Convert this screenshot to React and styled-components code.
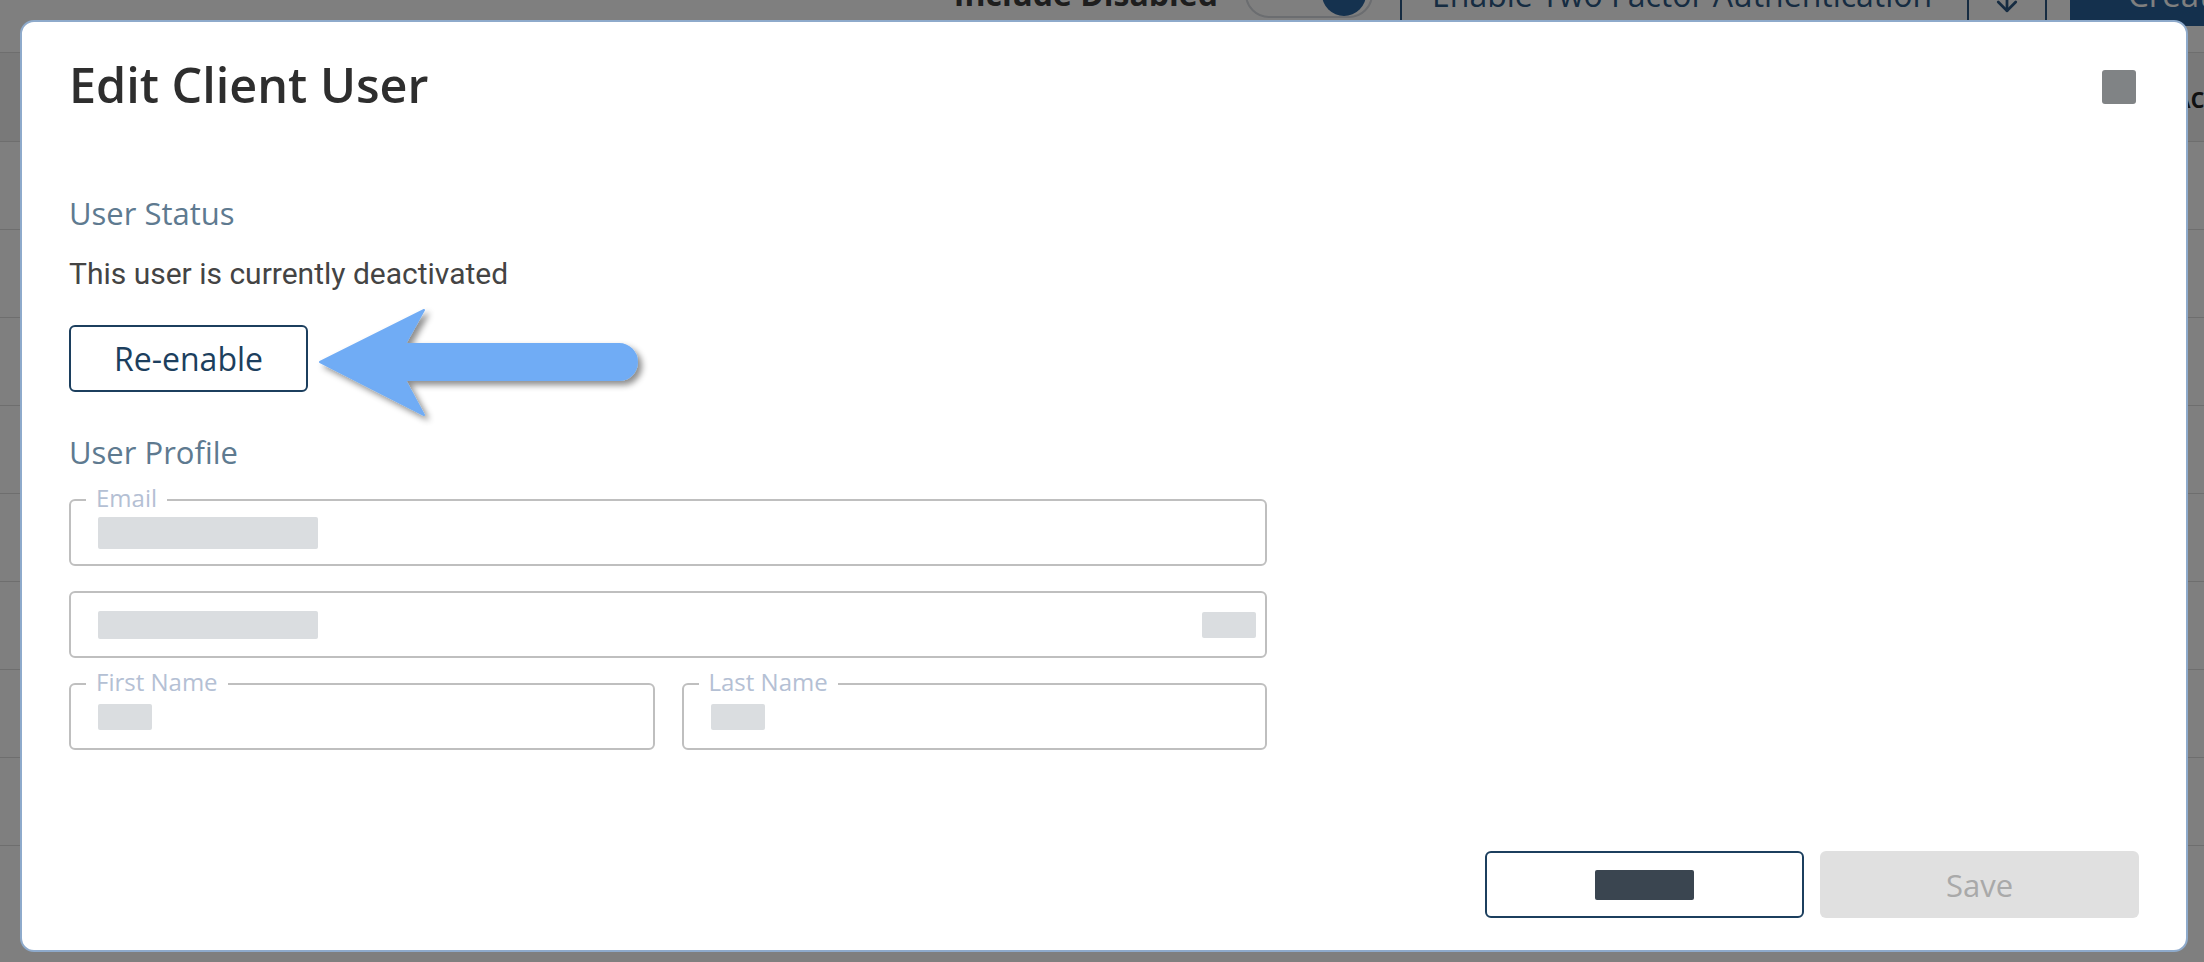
import React from 'react'
import styled, { createGlobalStyle } from 'styled-components'
import { ArrowDown } from 'lucide-react'

const GlobalStyle = createGlobalStyle`
  html, body {
    margin: 0;
    padding: 0;
    overflow: hidden;
    background: #fff;
  }
  * {
    box-sizing: border-box;
  }
`

function App() {
  const rows = [0, 1, 2, 3, 4, 5, 6, 7, 8]

  return (
    <>
      <GlobalStyle />
      <Page>
        <Toolbar>
          <ToggleLabel>Include Disabled</ToggleLabel>
          <Track>
            <Knob />
          </Track>
          <ButtonGroup>
            <OutlineAction>Enable Two Factor Authentication</OutlineAction>
            <IconAction>
              <ArrowDown size={30} strokeWidth={2.2} />
            </IconAction>
          </ButtonGroup>
          <CreateAction>Create</CreateAction>
        </Toolbar>
        <TableHead>
          <HeadCell>Account</HeadCell>
        </TableHead>
        {rows.map((r) => (
          <TableRow key={r} />
        ))}
      </Page>

      <Backdrop>
        <Modal>
          <Header>
            <Title>Edit Client User</Title>
            <CloseBox />
          </Header>

          <SectionTitle $gap={89}>User Status</SectionTitle>
          <StatusText>This user is currently deactivated</StatusText>
          <ActionRow>
            <ReenableButton>Re-enable</ReenableButton>
            <Arrow />
          </ActionRow>

          <SectionTitle $gap={45}>User Profile</SectionTitle>
          <Form>
            <Field>
              <FieldLabel>Email</FieldLabel>
              <Redacted $w={220} $h={32} />
            </Field>
            <Field>
              <Redacted $w={220} $h={28} />
              <Redacted $w={54} $h={26} />
            </Field>
            <NameRow>
              <Field>
                <FieldLabel>First Name</FieldLabel>
                <Redacted $w={54} $h={26} />
              </Field>
              <Field>
                <FieldLabel>Last Name</FieldLabel>
                <Redacted $w={54} $h={26} />
              </Field>
            </NameRow>
          </Form>

          <Footer>
            <CancelButton>
              <Redacted $w={99} $h={30} $dark />
            </CancelButton>
            <SaveButton disabled>Save</SaveButton>
          </Footer>
        </Modal>
      </Backdrop>
    </>
  )
}

function Arrow() {
  return (
    <ArrowSvg width="340" height="125" viewBox="0 0 340 125">
      <defs>
        <filter id="arrowShadow" x="-10%" y="-20%" width="130%" height="150%">
          <feDropShadow dx="4" dy="4" stdDeviation="3" floodColor="#000" floodOpacity="0.45" />
        </filter>
      </defs>
      <path
        d="M4 66 L108 14 L89 48 L303 48 A18 18 0 0 1 303 84 L89 84 L108 119 Z"
        fill="#70acf5"
        stroke="#70acf5"
        strokeWidth="2"
        strokeLinejoin="round"
        filter="url(#arrowShadow)"
      />
    </ArrowSvg>
  )
}

export default App

/* page behind the dialog */
const Page = styled.div`
  height: 100vh;
  background: #fff;
  font-family: "Open Sans", "Liberation Sans", sans-serif;
`

const Toolbar = styled.div`
  height: 90px;
  margin-top: -38px;
  display: flex;
  justify-content: flex-end;
  align-items: flex-start;
  gap: 27px;
`

const ToggleLabel = styled.div`
  height: 64px;
  line-height: 64px;
  font-size: 32px;
  font-weight: 700;
  color: #3c3c3c;
  white-space: nowrap;
`

const Track = styled.div`
  width: 128px;
  height: 48px;
  margin-top: 8px;
  border: 2px solid #d6dae0;
  border-radius: 24px;
  display: flex;
  justify-content: flex-end;
  align-items: center;
  padding-right: 5px;
`

const Knob = styled.div`
  width: 44px;
  height: 44px;
  border-radius: 50%;
  background: #2a649e;
`

const ButtonGroup = styled.div`
  display: flex;
  margin-right: -4px;
`

const OutlineAction = styled.div`
  width: 569px;
  height: 64px;
  padding-left: 30px;
  border: 2px solid #2c5884;
  display: flex;
  align-items: center;
  font-size: 32px;
  color: #2c5884;
  white-space: nowrap;
`

const IconAction = styled.div`
  width: 80px;
  height: 64px;
  margin-left: -2px;
  padding-top: 16px;
  border: 2px solid #2c5884;
  display: flex;
  align-items: center;
  justify-content: center;
  color: #2c5884;
`

const CreateAction = styled.div`
  width: 134px;
  height: 64px;
  background: #28609a;
  color: #fff;
  font-size: 33px;
  display: flex;
  align-items: center;
  padding-left: 58px;
  overflow: hidden;
  white-space: nowrap;
`

const TableHead = styled.div`
  height: 89px;
  background: #f3f3f3;
  border-top: 1px solid #dcdcdc;
  display: grid;
  grid-template-columns: 2172px 1fr;
  align-items: center;
  overflow: hidden;
`

const HeadCell = styled.div`
  grid-column: 2;
  font-size: 28px;
  font-weight: 600;
  color: #222;
  white-space: nowrap;
`

const TableRow = styled.div`
  height: 88px;
  border-top: 1px solid #dcdcdc;
`

/* dialog */
const Backdrop = styled.div`
  position: fixed;
  inset: 0;
  background: rgba(0, 0, 0, 0.5);
  display: flex;
  padding: 20px 16px 10px 20px;
`

const Modal = styled.div`
  flex: 1;
  background: #fff;
  border: 2px solid #8eaacb;
  border-radius: 14px;
  display: flex;
  flex-direction: column;
  padding: 38px 47px 32px 47px;
  font-family: "Open Sans", "Liberation Sans", sans-serif;
`

const Header = styled.div`
  display: flex;
  justify-content: space-between;
  align-items: flex-start;
`

const Title = styled.h2`
  margin: 0;
  font-size: 48.5px;
  line-height: 49px;
  font-weight: 600;
  color: #2e2e2e;
`

const CloseBox = styled.div`
  width: 34px;
  height: 34px;
  margin-top: 10px;
  margin-right: 3px;
  border-radius: 3px;
  background: #808385;
`

const SectionTitle = styled.h3`
  margin: ${(p) => p.$gap}px 0 0;
  font-size: 31px;
  line-height: 31px;
  font-weight: 400;
  color: #5e7a90;
`

const StatusText = styled.p`
  margin: 30px 0 0;
  font-family: Roboto, "Liberation Sans", sans-serif;
  font-size: 30px;
  line-height: 30px;
  color: #444;
`

const ActionRow = styled.div`
  height: 67px;
  margin-top: 36px;
  display: flex;
  align-items: center;
`

const ReenableButton = styled.button`
  width: 239px;
  height: 67px;
  flex-shrink: 0;
  border: 2px solid #1c3f5e;
  border-radius: 6px;
  background: #fff;
  font-family: "Open Sans", "Liberation Sans", sans-serif;
  font-size: 32px;
  color: #1c3f5e;
  padding: 0;
  cursor: pointer;
`

const ArrowSvg = styled.svg`
  flex-shrink: 0;
  margin-left: 8px;
  overflow: visible;
`

const Form = styled.div`
  width: 1198px;
  margin-top: 31px;
  display: flex;
  flex-direction: column;
  gap: 25px;
`

const Field = styled.div`
  position: relative;
  height: 67px;
  border: 2px solid #bfbfbf;
  border-radius: 6px;
  display: flex;
  align-items: center;
  justify-content: space-between;
  padding: 0 9px 0 27px;
`

const FieldLabel = styled.span`
  position: absolute;
  top: -15px;
  left: 15px;
  padding: 0 10px;
  background: #fff;
  font-size: 24px;
  line-height: 24px;
  color: #b4c0d4;
`

const Redacted = styled.div`
  width: ${(p) => p.$w}px;
  height: ${(p) => p.$h}px;
  border-radius: 2px;
  background: ${(p) => (p.$dark ? '#3a4550' : '#dadde0')};
`

const NameRow = styled.div`
  display: grid;
  grid-template-columns: 1fr 1fr;
  gap: 27px;
`

const Footer = styled.div`
  margin-top: auto;
  display: flex;
  justify-content: flex-end;
  gap: 16px;
`

const CancelButton = styled.button`
  width: 319px;
  height: 67px;
  border: 2px solid #1c3f5e;
  border-radius: 6px;
  background: #fff;
  display: flex;
  align-items: center;
  justify-content: center;
  padding: 0;
  cursor: pointer;
`

const SaveButton = styled.button`
  width: 319px;
  height: 67px;
  border: none;
  border-radius: 6px;
  background: #e0e0e0;
  font-family: "Open Sans", "Liberation Sans", sans-serif;
  font-size: 31px;
  color: #a9a9a9;
  padding: 0;
`
